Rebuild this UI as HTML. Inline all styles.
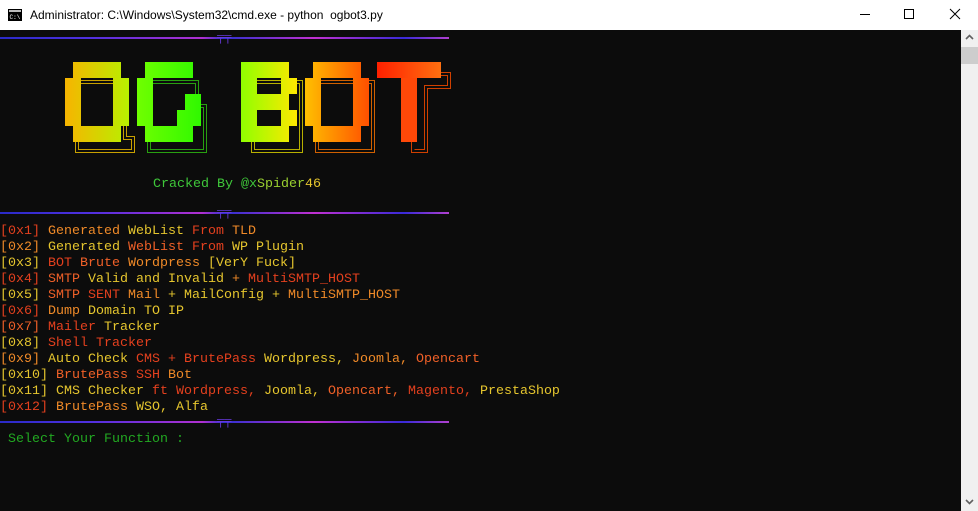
<!DOCTYPE html>
<html><head><meta charset="utf-8"><style>
*{margin:0;padding:0;box-sizing:border-box}
body{width:978px;height:511px;overflow:hidden;background:#0c0c0c;position:relative;font-family:"Liberation Mono",monospace}
#tb{position:absolute;left:0;top:0;width:978px;height:30px;background:#fff;font-family:"Liberation Sans",sans-serif;font-size:12px;color:#000}
#tb .t{position:absolute;left:30px;top:8px}
#sb{position:absolute;left:961px;top:30px;width:17px;height:481px;background:#f0f0f0}
#txt{position:absolute;left:0;top:2px;width:960px;height:480px}
.ln{position:absolute;left:0;font-size:13.33px;line-height:16px;white-space:pre;letter-spacing:0}
.r{color:#e4401e}.o{color:#f08a28}.y{color:#e6c62e}.ro{color:#f06028}.g{color:#3fc83a}
.sep{position:absolute;left:0;width:449px;height:2px;background:linear-gradient(90deg,#2a2ac8,#5030e0 20%,#b030d0 45%,#3030d0 50%,#c030d0 70%,#3a2ad8 90%,#b040d0)}
.sepm{position:absolute;left:217px;font-size:12px;color:#6a3ae0;font-weight:bold;line-height:10px}
</style></head><body>
<div id="tb">
<svg style="position:absolute;left:8px;top:9px" width="14" height="12"><rect x="0" y="0" width="14" height="12" fill="#000"/><rect x="1" y="1" width="12" height="2" fill="#bbb"/><text x="1.5" y="10" font-size="6" fill="#fff" font-family="Liberation Mono">C:\</text></svg>
<span class="t">Administrator: C:\Windows\System32\cmd.exe - python&nbsp; ogbot3.py</span>
<svg style="position:absolute;left:858px;top:8px" width="110" height="14" fill="none" stroke="#000" stroke-width="1">
<line x1="2" y1="6.5" x2="12" y2="6.5"/><rect x="46.5" y="1.5" width="9" height="9"/><path d="M92 1 L102 11 M102 1 L92 11"/></svg>
</div>
<div id="sb"><div style="position:absolute;left:0;top:17px;width:17px;height:17px;background:#cdcdcd"></div>
<svg style="position:absolute;left:4px;top:4px" width="9" height="6"><path d="M1 5 L4.5 1.5 L8 5" stroke="#606060" stroke-width="1.6" fill="none"/></svg>
<svg style="position:absolute;left:4px;top:469px" width="9" height="6"><path d="M1 1 L4.5 4.5 L8 1" stroke="#606060" stroke-width="1.6" fill="none"/></svg></div>

<div class="sep" style="top:37px"></div><div class="sepm" style="top:32px">╤╤</div>
<div class="sep" style="top:212px"></div><div class="sepm" style="top:207px">╤╤</div>
<div class="sep" style="top:421px"></div><div class="sepm" style="top:416px">╤╤</div>

<svg style="position:absolute;left:0;top:0" width="460" height="160">
<defs>
<linearGradient id="gO"><stop offset="0" stop-color="#f7b400"/><stop offset="1" stop-color="#b8f000"/></linearGradient>
<linearGradient id="gG"><stop offset="0" stop-color="#70ff00"/><stop offset="1" stop-color="#30f800"/></linearGradient>
<linearGradient id="gB"><stop offset="0" stop-color="#90ff00"/><stop offset="1" stop-color="#ffe800"/></linearGradient>
<linearGradient id="gO2"><stop offset="0" stop-color="#ffc000"/><stop offset="1" stop-color="#ff5000"/></linearGradient>
<linearGradient id="gT"><stop offset="0" stop-color="#ff2000"/><stop offset="1" stop-color="#ff7010"/></linearGradient>
</defs>
<g transform="translate(0,62)">
<g fill="none" stroke-width="1">
<path d="M75.5 18.5H126.5V74.5H134.5V90.5H75.5Z" stroke="#c8a000"/>
<path d="M78.5 21.5H123.5V77.5H131.5V87.5H78.5Z" stroke="#c8a000"/>
<path d="M147.5 18.5H198.5V42.5H206.5V90.5H147.5Z" stroke="#28a010"/>
<path d="M150.5 21.5H195.5V45.5H203.5V87.5H150.5Z" stroke="#28a010"/>
<path d="M251.5 18.5H302.5V90.5H251.5Z" stroke="#b8b000"/>
<path d="M254.5 21.5H299.5V87.5H254.5Z" stroke="#b8b000"/>
<path d="M315.5 18.5H374.5V90.5H315.5Z" stroke="#d06000"/>
<path d="M318.5 21.5H371.5V87.5H318.5Z" stroke="#d06000"/>
<path d="M387.5 10.5H450.5V26.5H427.5V90.5H411.5V26.5" stroke="#d04000"/>
<path d="M390.5 13.5H447.5V23.5H424.5V87.5H414.5" stroke="#d04000"/>
</g>
<g fill="url(#gO)"><path d="M73 0H121V16H129V64H121V80H73V64H65V16H73Z M81 16V64H113V16Z" fill-rule="evenodd"/></g>
<g fill="url(#gG)"><path d="M145 0H193V16H153V64H177V48H185V32H201V64H193V80H145V64H137V16H145Z" /></g>
<g fill="url(#gB)"><path d="M241 0H289V16H297V32H289V48H297V64H289V80H241Z M257 16V32H281V16Z M257 48V64H281V48Z" fill-rule="evenodd"/></g>
<g fill="url(#gO2)"><path d="M313 0H361V16H369V64H361V80H313V64H305V16H313Z M321 16V64H353V16Z" fill-rule="evenodd"/></g>
<g fill="url(#gT)"><rect x="377" y="0" width="64" height="16"/></g>
<rect x="401" y="16" width="16" height="64" fill="#ff4808"/>
</g>
</svg>

<div id="txt">
<div class="ln" style="top:175px;left:153px"><span class="g">Cracked By @x</span><span style="color:#9ad030">Spider</span><span class="y">46</span></div>

<div class="ln" style="top:222px"><span class="r">[0x1]</span> <span class="o">Generated</span> <span class="y">WebList</span> <span class="r">From</span> <span class="o">TLD</span></div>
<div class="ln" style="top:238px"><span class="o">[0x2]</span> <span class="y">Generated</span> <span class="ro">WebList</span> <span class="r">From</span> <span class="y">WP Plugin</span></div>
<div class="ln" style="top:254px"><span class="y">[0x3]</span> <span class="r">BOT</span> <span class="ro">Brute</span> <span class="o">Wordpress</span> <span class="y">[VerY Fuck]</span></div>
<div class="ln" style="top:270px"><span class="r">[0x4]</span> <span class="ro">SMTP</span> <span class="y">Valid and Invalid</span> <span class="o">+</span> <span class="r">MultiSMTP_HOST</span></div>
<div class="ln" style="top:286px"><span class="y">[0x5]</span> <span class="ro">SMTP</span> <span class="r">SENT</span> <span class="o">Mail</span> <span class="y">+ MailConfig +</span> <span class="o">MultiSMTP_HOST</span></div>
<div class="ln" style="top:302px"><span class="r">[0x6]</span> <span class="o">Dump</span> <span class="y">Domain TO IP</span></div>
<div class="ln" style="top:318px"><span class="ro">[0x7]</span> <span class="r">Mailer</span> <span class="y">Tracker</span></div>
<div class="ln" style="top:334px"><span class="y">[0x8]</span> <span class="r">Shell Tracker</span></div>
<div class="ln" style="top:350px"><span class="o">[0x9]</span> <span class="y">Auto Check</span> <span class="r">CMS + BrutePass</span> <span class="y">Wordpress,</span> <span class="o">Joomla,</span> <span class="ro">Opencart</span></div>
<div class="ln" style="top:366px"><span class="y">[0x10]</span> <span class="ro">BrutePass</span> <span class="r">SSH</span> <span class="o">Bot</span></div>
<div class="ln" style="top:382px"><span class="y">[0x11]</span> <span class="y">CMS Checker</span> <span class="r">ft Wordpress,</span> <span class="y">Joomla,</span> <span class="ro">Opencart,</span> <span class="r">Magento,</span> <span class="y">PrestaShop</span></div>
<div class="ln" style="top:398px"><span class="r">[0x12]</span> <span class="o">BrutePass</span> <span class="y">WSO, Alfa</span></div>
<div class="ln" style="top:430px"><span style="color:#22a822"> Select Your Function :</span></div>
</div>
</body></html>
